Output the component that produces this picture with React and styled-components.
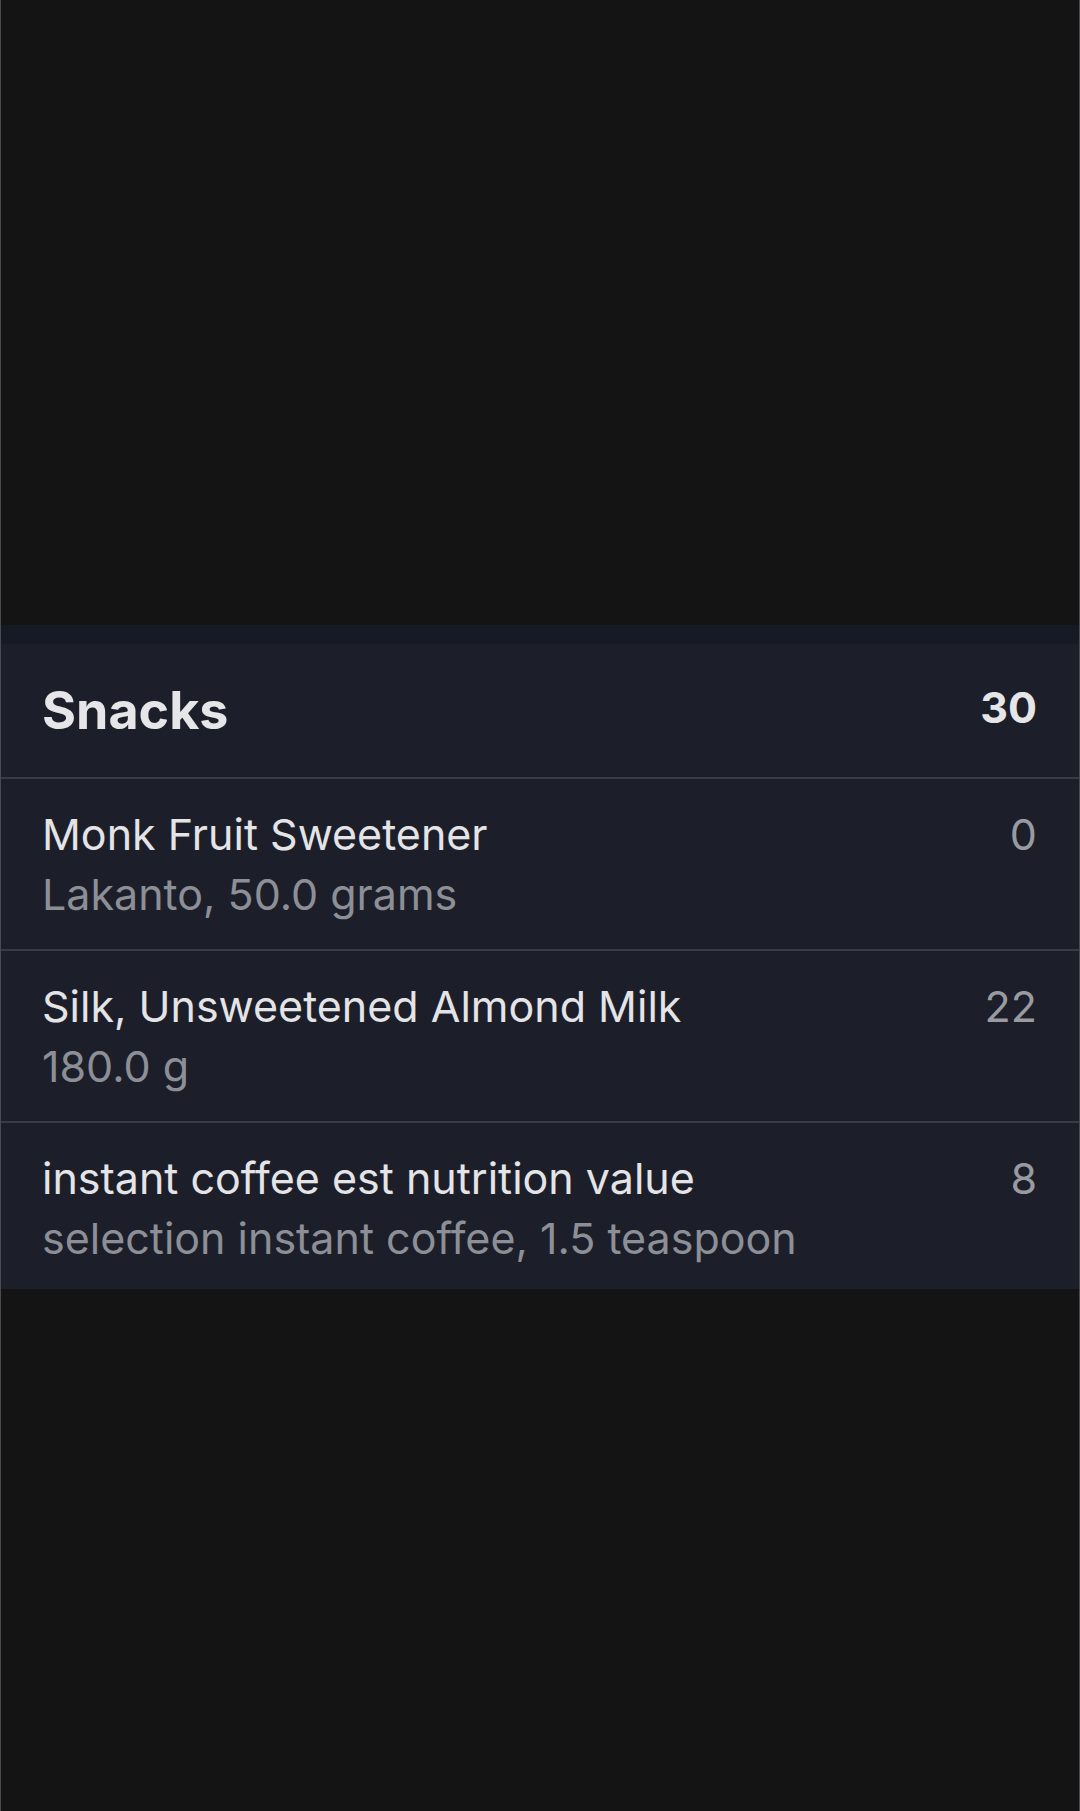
import React from "react";
import styled, { createGlobalStyle } from "styled-components";

const entries = [
  { id: 1, name: "Monk Fruit Sweetener", detail: "Lakanto, 50.0 grams", value: 0 },
  { id: 2, name: "Silk, Unsweetened Almond Milk", detail: "180.0 g", value: 22 },
  {
    id: 3,
    name: "instant coffee est nutrition value",
    detail: "selection instant coffee, 1.5 teaspoon",
    value: 8,
  },
];

// Component
const App = () => {
  const total = entries.reduce((sum, e) => sum + e.value, 0);

  return (
    <>
      <GlobalStyle />
      <Screen>
        <TopArea />
        <Band />
        <Meal>
          <Header>
            <Title>Snacks</Title>
            <Total>{total}</Total>
          </Header>
          {entries.map((entry) => (
            <Entry key={entry.id}>
              <Info>
                <Name>{entry.name}</Name>
                <Detail>{entry.detail}</Detail>
              </Info>
              <Value>{entry.value}</Value>
            </Entry>
          ))}
        </Meal>
      </Screen>
    </>
  );
};

// Styles
const GlobalStyle = createGlobalStyle`
  html, body {
    margin: 0;
    padding: 0;
    background: #141414;
  }
  body {
    font-family: Inter, "Noto Sans", sans-serif;
  }
`;
const Screen = styled.div`
  min-height: 100vh;
  box-sizing: border-box;
  border-left: 1px solid #4a4a4f;
  border-right: 1px solid #4a4a4f;
  background: #141414;
  display: flex;
  flex-direction: column;
`;
const TopArea = styled.div`
  height: 625px;
`;
const Band = styled.div`
  height: 19px;
  background: #161a25;
`;
const Meal = styled.section`
  background: #1c1f2a;
`;
const Header = styled.div`
  height: 135px;
  box-sizing: border-box;
  padding: 0 42px 0 41px;
  display: flex;
  justify-content: space-between;
  align-items: center;
  border-bottom: 2px solid #393b46;
`;
const Title = styled.h2`
  margin: 0;
  font-size: 52px;
  font-weight: 700;
  color: #e6e6e8;
`;
const Total = styled.div`
  font-size: 43px;
  font-weight: 700;
  color: #e6e6e8;
  margin-bottom: 8px;
`;
const Entry = styled.div`
  box-sizing: border-box;
  height: 172px;
  padding: 25px 42px 0 41px;
  display: flex;
  justify-content: space-between;
  align-items: flex-start;
  border-bottom: 2px solid #393b46;
  &:last-child {
    border-bottom: none;
    height: 166px;
  }
`;
const Info = styled.div`
  display: flex;
  flex-direction: column;
`;
const Name = styled.div`
  font-size: 43px;
  line-height: 60px;
  color: #e4e4e6;
`;
const Detail = styled.div`
  font-size: 43px;
  line-height: 60px;
  color: #8d8f96;
`;
const Value = styled.div`
  font-size: 43px;
  line-height: 60px;
  color: #9a9ba1;
`;

export default App;
